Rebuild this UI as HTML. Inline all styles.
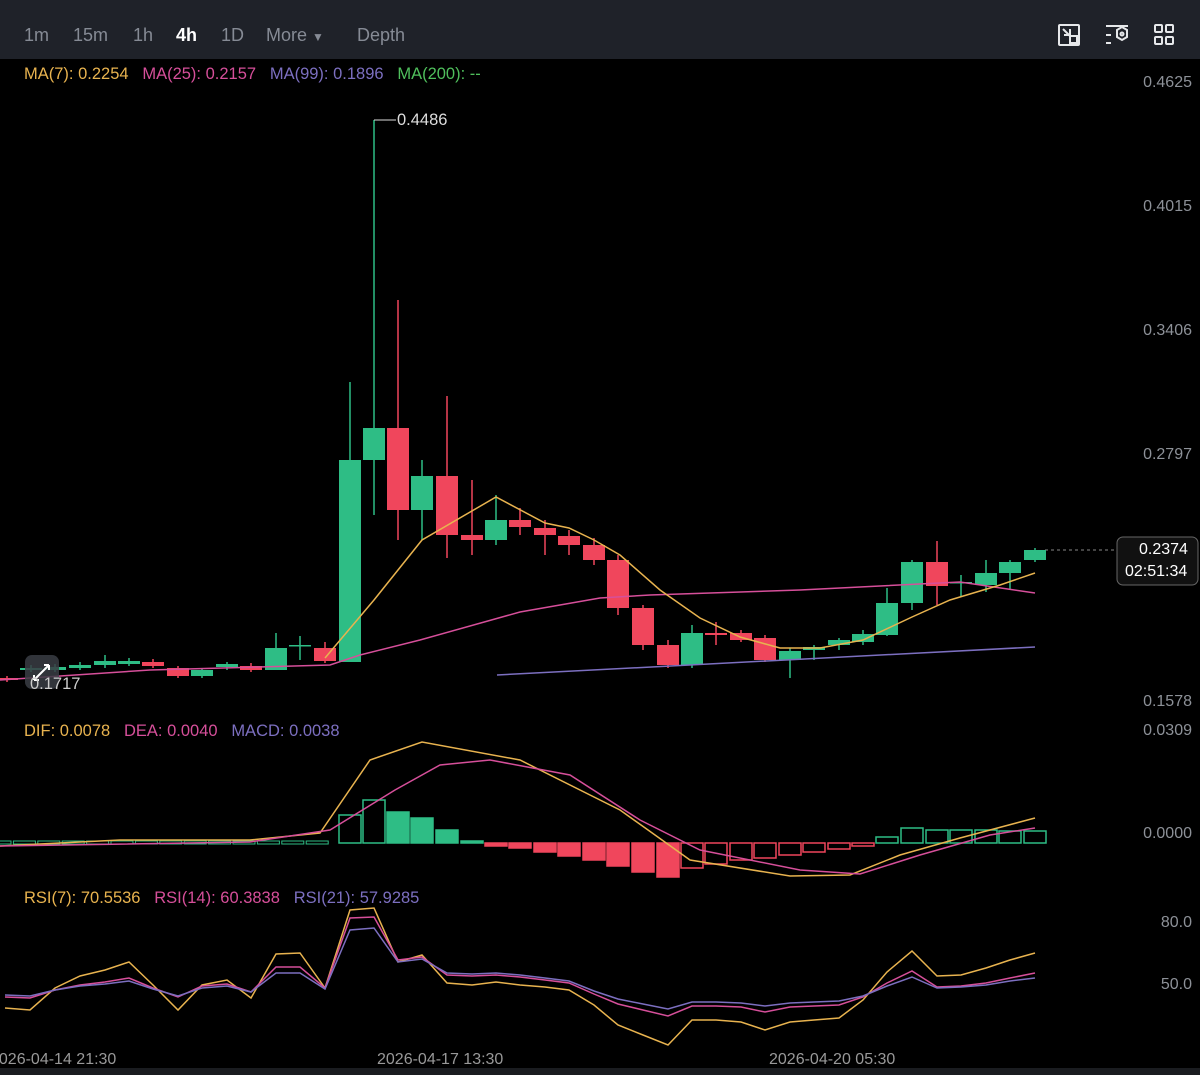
<!DOCTYPE html>
<html><head><meta charset="utf-8"><style>
html,body{margin:0;padding:0;background:#000;width:1200px;height:1075px;overflow:hidden;font-family:"Liberation Sans",sans-serif}
.top{position:absolute;left:0;top:0;width:1200px;height:59px;background:#1f2229}
.tab{position:absolute;top:25px;font-size:18px;color:#868b95}
svg{position:absolute;left:0;top:0}
.lbl{position:absolute;font-size:16.5px}
.ax{position:absolute;right:8px;font-size:16px;color:#8d9198}
</style></head><body>
<div class="top"></div>
<div class="tab" style="left:24px">1m</div>
<div class="tab" style="left:73px">15m</div>
<div class="tab" style="left:133px">1h</div>
<div class="tab" style="left:176px;color:#fff;font-weight:bold">4h</div>
<div class="tab" style="left:221px">1D</div>
<div class="tab" style="left:266px">More <span style="font-size:12px">▼</span></div>
<div class="tab" style="left:357px">Depth</div>
<svg width="1200" height="1075" viewBox="0 0 1200 1075" id="s">
<g fill="none" stroke="#e6e8ea" stroke-width="2">
<rect x="1059" y="25" width="20" height="20" rx="1"/><rect x="1070" y="36" width="7" height="7" fill="#1f2229"/><path d="M1063 29l7 7M1064 35h6v-6"/>
<path d="M1106 26h22M1106 35h5M1106 43h5"/><path d="M1117 30l5-3 5 3v7l-5 3-5-3z"/><circle cx="1122" cy="34" r="1.5"/>
<rect x="1155" y="25" width="7" height="7" rx="1"/><rect x="1166" y="25" width="7" height="7" rx="1"/><rect x="1155" y="37" width="7" height="7" rx="1"/><rect x="1166" y="37" width="7" height="7" rx="1"/>
</g>
<line x1="1045" y1="550" x2="1117" y2="550" stroke="#888" stroke-dasharray="3,3"/>
<rect x="1117" y="537" width="81" height="48" rx="6" fill="#111" stroke="#666"/>
<g id="c"></g>
<rect x="25" y="655" width="34" height="34" rx="7" fill="#3a3d44" opacity="0.85"/>
<path d="M34 680l15-15M34 680v-5M34 680h5M49 665h-5M49 665v5" stroke="#fff" stroke-width="2" fill="none"/>
<path d="M374 120h22" stroke="#ddd" stroke-width="1"/>
<rect x="0" y="1068" width="1200" height="7" fill="#1a1c20"/>
</svg>
<div class="lbl" style="left:24px;top:65px"><span style="color:#e8b34f">MA(7): 0.2254</span>&nbsp;&nbsp; <span style="color:#d64f9a">MA(25): 0.2157</span>&nbsp;&nbsp; <span style="color:#7c6fc0">MA(99): 0.1896</span>&nbsp;&nbsp; <span style="color:#4fbf5c">MA(200): --</span></div>
<div class="lbl" style="left:397px;top:111px;color:#ddd">0.4486</div>
<div class="lbl" style="left:30px;top:675px;color:#ccc">0.1717</div>
<div class="lbl" style="left:24px;top:722px"><span style="color:#e8b34f">DIF: 0.0078</span>&nbsp;&nbsp; <span style="color:#d64f9a">DEA: 0.0040</span>&nbsp;&nbsp; <span style="color:#7c6fc0">MACD: 0.0038</span></div>
<div class="lbl" style="left:24px;top:889px"><span style="color:#e8b34f">RSI(7): 70.5536</span>&nbsp;&nbsp; <span style="color:#d64f9a">RSI(14): 60.3838</span>&nbsp;&nbsp; <span style="color:#7c6fc0">RSI(21): 57.9285</span></div>
<div class="ax" style="top:74px">0.4625</div>
<div class="ax" style="top:198px">0.4015</div>
<div class="ax" style="top:322px">0.3406</div>
<div class="ax" style="top:446px">0.2797</div>
<div class="ax" style="top:693px">0.1578</div>
<div class="ax" style="top:722px">0.0309</div>
<div class="ax" style="top:825px">0.0000</div>
<div class="ax" style="top:914px">80.0</div>
<div class="ax" style="top:976px">50.0</div>
<div class="lbl" style="left:1139px;top:541px;color:#fff;font-size:16px">0.2374</div>
<div class="lbl" style="left:1125px;top:563px;color:#fff;font-size:16px">02:51:34</div>
<div class="lbl" style="left:-10px;top:1051px;color:#999;font-size:16px">2026-04-14 21:30</div>
<div class="lbl" style="left:377px;top:1051px;color:#999;font-size:16px">2026-04-17 13:30</div>
<div class="lbl" style="left:769px;top:1051px;color:#999;font-size:16px">2026-04-20 05:30</div>
<script>
var G='#2ebd85',R='#f0465c',g=document.getElementById('c'),h='';
var C=[[7,678,680,676,682],[31,670,668,665,672],[55,670,667,664,672],[80,668,665,662,670],[105,665,661,655,668],[129,664,661,658,666],[153,662,666,659,668],[178,668,676,666,678],[202,676,670,668,678],[227,667,664,662,670],[251,666,670,663,672],[276,670,648,633,670],[300,645,645,636,660],[325,648,661,642,663],[350,662,460,382,662],[374,460,428,120,515],[398,428,510,300,540],[422,510,476,460,540],[447,476,535,396,558],[472,535,540,480,555],[496,540,520,495,545],[520,520,527,508,535],[545,528,535,520,555],[569,536,545,530,555],[594,545,560,538,565],[618,560,608,555,615],[643,608,645,605,650],[668,645,665,640,668],[692,665,633,625,668],[716,633,635,622,645],[741,633,640,630,642],[765,638,660,635,662],[790,660,651,648,678],[814,650,647,645,660],[839,645,640,638,650],[863,642,634,630,645],[887,635,603,588,636],[912,603,562,560,610],[937,562,586,541,605],[961,582,582,575,597],[986,585,573,560,592],[1010,573,562,560,590],[1035,560,550,548,562]];
C.forEach(function(c){var col=c[2]<c[1]||c[1]==c[2]?G:R;h+='<line x1="'+c[0]+'" x2="'+c[0]+'" y1="'+c[3]+'" y2="'+c[4]+'" stroke="'+col+'" stroke-width="1.5"/>';var t=Math.min(c[1],c[2]),b=Math.max(c[1],c[2]);h+='<rect x="'+(c[0]-11)+'" y="'+t+'" width="22" height="'+Math.max(b-t,1.5)+'" fill="'+col+'"/>';});
function L(p,c){return '<polyline fill="none" stroke="'+c+'" stroke-width="1.5" points="'+p+'"/>';}
h+=L('0,680 150,670 330,665 360,655 420,640 520,612 600,598 650,595 800,590 960,582 1035,593','#d64f9a');
h+=L('325,658 374,600 422,540 496,497 545,523 569,528 594,540 620,555 660,590 700,618 740,637 780,648 820,648 863,640 912,617 950,600 1000,585 1035,573','#e8b34f');
h+=L('497,675 1035,647','#7c6fc0');
var M=[[350,815,0],[374,800,0],[398,812,1],[422,818,1],[447,830,1],[472,841,1],[496,846,1],[520,848,1],[545,852,1],[569,856,1],[594,860,1],[618,866,1],[643,872,1],[668,877,1],[692,868,2],[716,864,2],[741,860,2],[765,858,2],[790,855,2],[814,852,2],[839,849,2],[863,846,2],[887,837,0],[912,828,0],[937,830,0],[961,830,0],[986,830,0],[1010,831,0],[1035,831,0]];
M.forEach(function(m){var z=843,col=m[2]==0||(m[2]==1&&m[1]<z)?G:R;var t=Math.min(m[1],z),b=Math.max(m[1],z);var fill=(m[2]==1)?col:'none';h+='<rect x="'+(m[0]-11)+'" y="'+t+'" width="22" height="'+Math.max(b-t,1)+'" fill="'+fill+'" stroke="'+col+'" stroke-width="1.5"/>';});
for(var x=0;x<340;x+=24.4)h+='<rect x="'+(x-11)+'" y="841" width="22" height="3" fill="none" stroke="'+G+'" stroke-width="1"/>';
h+=L('0,846 120,840 250,840 320,833 370,760 422,742 520,760 620,810 690,860 790,876 850,875 900,855 960,838 1035,818','#e8b34f');
h+=L('0,846 250,842 330,830 395,790 440,765 490,760 570,775 640,820 700,850 800,870 860,874 920,855 990,835 1035,828','#d64f9a');
h+=L('5,1008 30,1010 55,988 80,976 105,970 129,962 153,985 178,1010 202,985 227,980 251,998 276,954 300,953 325,988 350,910 374,908 398,962 422,955 447,983 472,985 496,982 520,985 545,987 569,990 594,1005 618,1025 643,1035 668,1045 692,1020 716,1020 741,1022 765,1030 790,1022 814,1020 839,1018 863,1000 887,972 912,951 937,976 961,975 986,968 1010,960 1035,953','#e8b34f');
h+=L('5,997 30,998 55,990 80,985 105,982 129,978 153,988 178,997 202,986 227,984 251,992 276,967 300,967 325,988 350,918 374,917 398,960 422,957 447,975 472,976 496,975 520,977 545,980 569,983 594,994 618,1004 643,1010 668,1016 692,1006 716,1006 741,1007 765,1012 790,1007 814,1006 839,1005 863,997 887,983 912,971 937,987 961,986 986,983 1010,978 1035,973','#d64f9a');
h+=L('5,995 30,996 55,990 80,986 105,984 129,981 153,989 178,996 202,988 227,986 251,992 276,973 300,973 325,989 350,930 374,928 398,962 422,959 447,973 472,974 496,973 520,975 545,978 569,981 594,991 618,999 643,1004 668,1009 692,1002 716,1002 741,1003 765,1006 790,1003 814,1002 839,1001 863,996 887,986 912,977 937,988 961,987 986,985 1010,981 1035,978','#7c6fc0');
g.innerHTML=h;
</script>
</body></html>
